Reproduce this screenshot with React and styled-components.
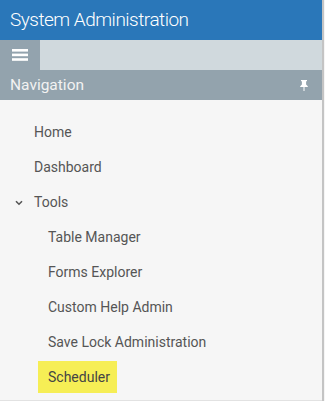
import React from "react";
import styled, { createGlobalStyle } from "styled-components";

const GlobalStyle = createGlobalStyle`
  body {
    margin: 0;
    background: #ffffff;
    font-family: Roboto, "Liberation Sans", Arial, sans-serif;
  }
`;

const items = [
  { label: "Home", level: 0 },
  { label: "Dashboard", level: 0 },
  { label: "Tools", level: 0, open: true },
  { label: "Table Manager", level: 1 },
  { label: "Forms Explorer", level: 1 },
  { label: "Custom Help Admin", level: 1 },
  { label: "Save Lock Administration", level: 1 },
  { label: "Scheduler", level: 1, active: true },
];

export default function App() {
  return (
    <>
      <GlobalStyle />
      <Shell>
        <Header>System Administration</Header>
        <Toolbar>
          <MenuButton aria-label="menu">
            <svg width="16" height="12" viewBox="0 0 16 12">
              <rect x="0" y="0" width="16" height="2.6" fill="#fff" />
              <rect x="0" y="4.6" width="16" height="2.6" fill="#fff" />
              <rect x="0" y="9.2" width="16" height="2.6" fill="#fff" />
            </svg>
          </MenuButton>
        </Toolbar>
        <Panel>
          <PanelHead>
            <span>Navigation</span>
            <svg width="8" height="11" viewBox="0 0 8 11">
              <path d="M1 0h6v1.2H6.1v3.3L7.8 6.2V7H4.5v4H3.5V7H0.2V6.2L1.9 4.5V1.2H1z" fill="#fff" />
            </svg>
          </PanelHead>
          <List>
            {items.map((it) => (
              <Row key={it.label} $level={it.level}>
                {it.open && (
                  <Chevron width="8" height="6" viewBox="0 0 8 6">
                    <path d="M1 1.2l3 3 3-3" stroke="#555" strokeWidth="1.6" fill="none" />
                  </Chevron>
                )}
                <Link $active={it.active}>{it.label}</Link>
              </Row>
            ))}
          </List>
        </Panel>
      </Shell>
    </>
  );
}

const Shell = styled.div`
  width: 322px;
  height: 400px;
  display: flex;
  flex-direction: column;
  background: #f6f6f6;
  box-shadow: 2px 0 1px #c4c4c4;
  border-bottom: 1px solid #e2e2e2;
`;

const Header = styled.div`
  height: 40px;
  background: #2a77b9;
  color: #fff;
  font-size: 19px;
  font-weight: 300;
  letter-spacing: -0.5px;
  line-height: 39px;
  padding-left: 10px;
`;

const Toolbar = styled.div`
  height: 30px;
  background: #d0d9dd;
  display: flex;
`;

const MenuButton = styled.div`
  width: 40px;
  height: 30px;
  background: #93a3ae;
  display: flex;
  align-items: center;
  justify-content: center;
`;

const Panel = styled.div`
  flex: 1;
  display: flex;
  flex-direction: column;
`;

const PanelHead = styled.div`
  height: 30px;
  background: #93a3ad;
  color: #f2f2f2;
  font-size: 15.5px;
  display: flex;
  align-items: center;
  justify-content: space-between;
  padding: 0 14px 0 10px;
`;

const List = styled.ul`
  list-style: none;
  margin: 0;
  padding: 16px 0 0;
`;

const Row = styled.li`
  height: 35px;
  display: flex;
  align-items: flex-start;
  padding-left: ${(p) => (p.$level ? 38 : 24)}px;
  position: relative;
`;

const Chevron = styled.svg`
  position: absolute;
  left: 15px;
  top: 14px;
`;

const Link = styled.span`
  display: inline-block;
  font-size: 14px;
  line-height: 20px;
  padding: 6px 7px 6px 10px;
  color: ${(p) => (p.$active ? "#444" : "#555")};
  background: ${(p) => (p.$active ? "#f6ee55" : "transparent")};
`;
